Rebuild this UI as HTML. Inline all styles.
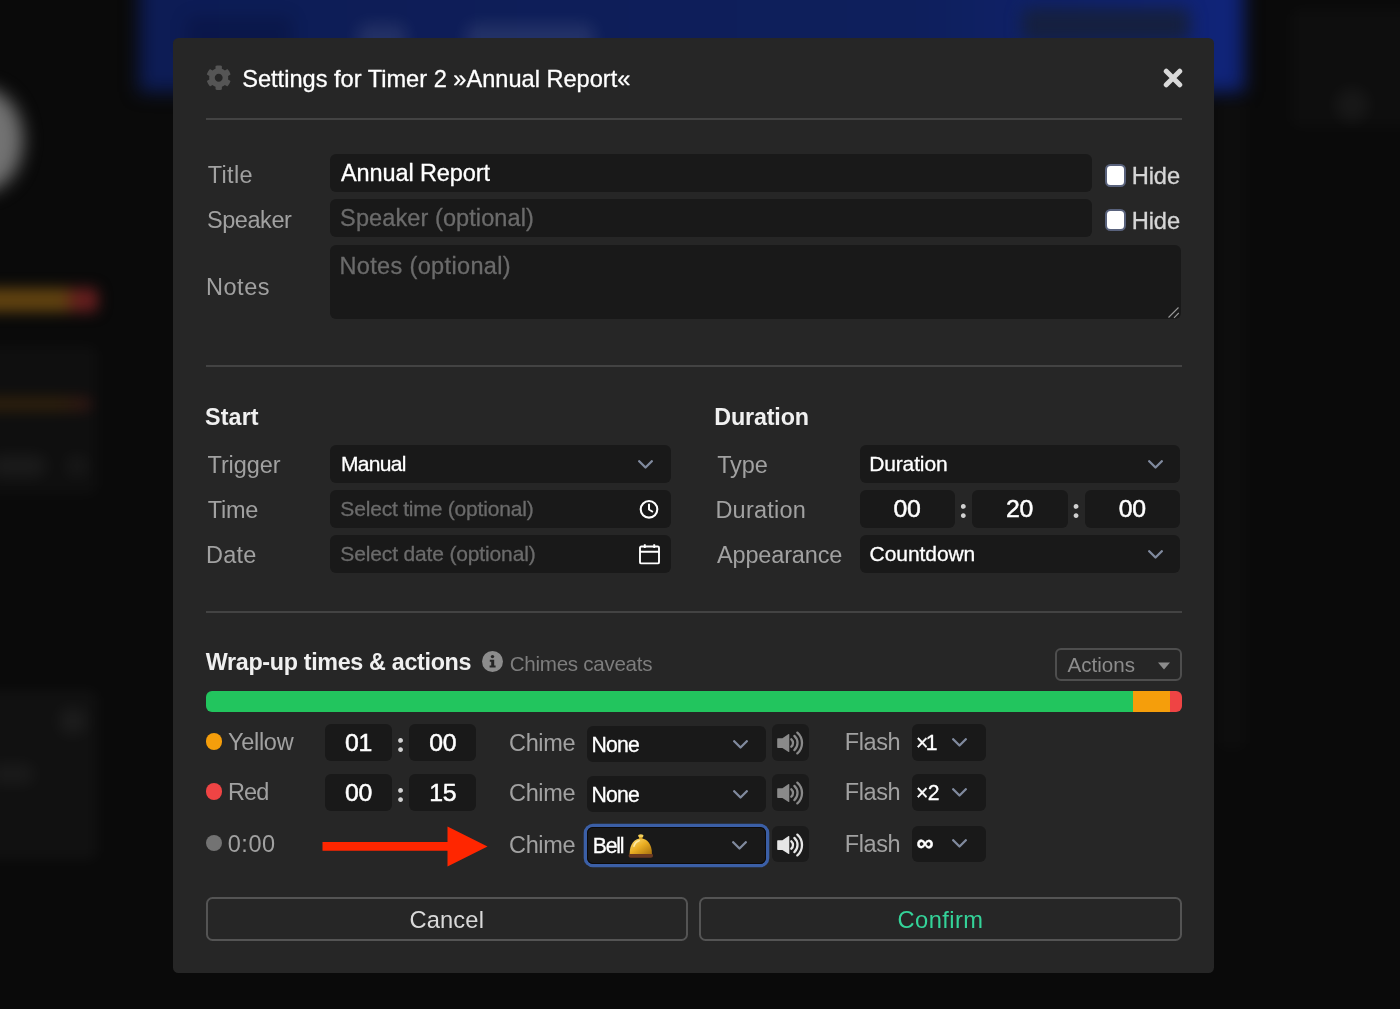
<!DOCTYPE html>
<html lang="en">
<head>
<meta charset="utf-8">
<title>Settings for Timer 2 »Annual Report«</title>
<style>
*{box-sizing:border-box;margin:0;padding:0}
html,body{width:1400px;height:1009px;overflow:hidden;background:#0a0a0a}
body{font-family:"Liberation Sans",sans-serif;color:#fff;position:relative}
.bg{position:absolute;left:0;top:0;width:1400px;height:1009px;overflow:hidden}
.bg div{position:absolute}
.blue{left:139px;top:-24px;width:1105px;height:116px;background:linear-gradient(90deg,#0d1c55 0,#0e1f5c 70%,#10247a 100%);filter:blur(9px)}
.lb{background:rgba(255,255,255,.09);border-radius:8px;filter:blur(8px)}
.db{background:rgba(0,0,20,.18);border-radius:8px;filter:blur(8px)}
.blob{left:-60px;top:88px;width:83px;height:104px;border-radius:50%;background:#727272;filter:blur(9px)}
.bar1{left:-20px;top:288px;width:118px;height:24px;border-radius:6px;background:linear-gradient(90deg,#604210 0,#604210 70%,#641e1e 82%,#641e1e 100%);filter:blur(7px)}
.bar2{left:-20px;top:397px;width:112px;height:14px;border-radius:6px;background:linear-gradient(90deg,#2b1c08 0,#2b1c08 70%,#2b1010 100%);filter:blur(7px)}
.dk1{left:1022px;top:8px;width:168px;height:34px;border-radius:8px;background:#15203f;filter:blur(8px)}
.modal{position:absolute;left:173px;top:37.5px;width:1041px;height:935.500px;background:#262626;border-radius:5.500px}
.abs{position:absolute}
.row{position:absolute;display:flex;align-items:center;white-space:nowrap}
.lbl{color:#a1a1a1;font-size:23.500px;height:38px;padding-top:3.500px}
.inp{-webkit-text-stroke:.3px currentColor;background:#191919;border-radius:6px;height:37.600px;font-size:21px;color:#fff;padding-left:11px}
.ph{color:#6b6b6b}
.hr{position:absolute;left:206px;width:976px;height:2px;background:#434343}
.h2{font-weight:700;font-size:23.300px;color:#f0f0f0;height:26px}
.num{justify-content:center;padding-left:0;font-size:24.800px;-webkit-text-stroke:.500px currentColor;text-indent:.6px}
.colon{color:#d2d2d2;font-family:"Liberation Serif",serif;font-size:29.500px;font-weight:700;justify-content:center;padding-top:.600px}
.btn{border:2px solid #545454;border-radius:6.500px;justify-content:center;font-size:23.700px;color:#d9d9d9;height:44px;padding-top:2px}
.cb{width:21px;height:22.300px;background:#fff;border:2px solid #59627c;border-radius:5.500px}
.hide{font-size:23.700px;-webkit-text-stroke:.300px currentColor;padding-top:1.200px;color:#d6d6d6;height:26px}
.sel{position:absolute}
.chev{position:absolute;right:17.500px;top:15px}
.ico{position:absolute;top:50%;transform:translateY(-50%)}
.dot{width:16.500px;height:16.500px;border-radius:50%}
.sm{height:36.500px}
.num.sm{padding-top:1.400px}
.chm{padding-top:2px;font-size:21.200px}
.fl{padding-top:1px;font-size:21.200px}
.c2{right:18.200px;top:14px}
.c3{right:18.500px;top:13.500px}
.spk{width:37px;height:36.500px;background:#1b1b1b;border-radius:6px;justify-content:center;padding-top:1px}
.focus{box-shadow:inset 0 0 0 1px #0c0a0a,0 0 0 3.300px #3b5fa6;width:178.500px !important}
.bell{margin-left:4.300px;margin-top:-1.200px}
button{font-family:inherit;background:transparent;cursor:pointer}
</style>
<style id="fit">
#ttl{letter-spacing:0.00px;margin-left:-0.80px}
#l_title{letter-spacing:0.35px;margin-left:0.67px}
#i_title{letter-spacing:-0.11px;text-indent:0.00px}
#i_speaker{letter-spacing:0.10px;text-indent:-0.90px}
#i_notes{letter-spacing:0.36px;text-indent:-1.60px}
.hide{letter-spacing:-0.08px;margin-left:-0.38px}
#l_speaker{letter-spacing:-0.44px;margin-left:0.00px}
#l_notes{letter-spacing:0.56px;margin-left:-1.12px}
#h_start{letter-spacing:0.12px;margin-left:-0.48px}
#l_trigger{letter-spacing:-0.10px;margin-left:0.50px}
#t_manual{letter-spacing:-0.69px;margin-left:0.00px}
#l_time{letter-spacing:-0.22px;margin-left:0.67px}
#t_seltime{letter-spacing:-0.19px;margin-left:-0.65px}
#l_date{letter-spacing:0.29px;margin-left:-1.12px}
#t_seldate{letter-spacing:-0.15px;margin-left:-0.65px}
#h_dur{letter-spacing:-0.15px;margin-left:-1.25px}
#l_type{letter-spacing:-0.12px;margin-left:0.18px}
#t_duration{letter-spacing:-0.13px;margin-left:-1.35px}
#l_dur{letter-spacing:0.23px;margin-left:-1.60px}
#l_app{letter-spacing:-0.16px;margin-left:0.00px}
#t_countdown{letter-spacing:-0.06px;margin-left:-0.97px}
#h_wrap{letter-spacing:-0.32px;margin-left:0.26px}
#t_caveats{letter-spacing:-0.29px;margin-left:-0.75px}
#t_actions{letter-spacing:-0.01px;margin-left:-0.14px}
#l_yellow{letter-spacing:-0.27px;margin-left:-0.60px}
#l_red{letter-spacing:-0.97px;margin-left:-0.40px}
#l_zero{letter-spacing:0.58px;margin-left:-0.82px}
.l_chime{letter-spacing:-0.39px;margin-left:-0.90px}
.t_none{letter-spacing:-0.83px;margin-left:-0.96px}
#t_bell{letter-spacing:-1.23px;margin-left:0.28px}
.l_flash{letter-spacing:-0.36px;margin-left:-1.36px}
#t_cancel{letter-spacing:0.15px}
#t_confirm{letter-spacing:0.43px}
.num{letter-spacing:-0.30px;text-indent:-0.30px}
</style>
</head>
<body>
<div id="app" style="position:absolute;left:0;top:0;width:1400px;height:1009px;will-change:transform">
<div class="bg">
  <div class="blue"></div>
  <div class="dk1"></div>
  <div class="db" style="left:186px;top:16px;width:106px;height:40px"></div>
  <div class="lb" style="left:358px;top:24px;width:48px;height:30px"></div>
  <div class="lb" style="left:466px;top:24px;width:128px;height:30px"></div>
  <div class="lb" style="left:1335px;top:88px;width:34px;height:34px;border-radius:50%;opacity:.5"></div>
  <div class="blob"></div>
  <div class="bar1"></div>
  <div class="bar2"></div>
  <div class="lb" style="left:-20px;top:345px;width:118px;height:150px;background:rgba(255,255,255,.022);filter:blur(7px)"></div>
  <div class="lb" style="left:-20px;top:690px;width:118px;height:170px;background:rgba(255,255,255,.03);filter:blur(7px)"></div>
  <div class="lb" style="left:-10px;top:455px;width:56px;height:22px;background:rgba(255,255,255,.05)"></div>
  <div class="lb" style="left:66px;top:455px;width:22px;height:22px;background:rgba(255,255,255,.04)"></div>
  <div class="lb" style="left:60px;top:708px;width:26px;height:26px;background:rgba(255,255,255,.05)"></div>
  <div class="lb" style="left:-10px;top:764px;width:44px;height:20px;background:rgba(255,255,255,.045)"></div>
  <div class="lb" style="left:1290px;top:8px;width:130px;height:120px;background:rgba(255,255,255,.02);filter:blur(7px)"></div>
  <div class="lb" style="left:1216px;top:100px;width:32px;height:650px;background:rgba(255,255,255,.015);filter:blur(7px)"></div>
</div>
<div class="modal"></div>

<!-- header -->
<svg class="abs" style="left:205.700px;top:65.400px" width="25.400" height="25.400" viewBox="0 0 512 512"><path fill="#555" d="M487.4 315.700l-42.600-24.600c4.300-23.200 4.300-47 0-70.200l42.600-24.600c4.900-2.800 7.100-8.600 5.500-14-11.100-35.600-30-67.800-54.700-94.600-3.800-4.100-10-5.100-14.800-2.300L380.800 110c-17.900-15.400-38.500-27.300-60.800-35.100V25.800c0-5.600-3.900-10.500-9.400-11.700-36.700-8.200-74.300-7.800-109.200 0-5.500 1.200-9.400 6.100-9.400 11.700V75c-22.200 7.900-42.800 19.800-60.800 35.100L88.700 85.500c-4.900-2.800-11-1.900-14.800 2.300-24.700 26.700-43.600 58.900-54.700 94.600-1.700 5.400.6 11.200 5.500 14L67.300 221c-4.300 23.200-4.300 47 0 70.200l-42.600 24.600c-4.900 2.800-7.100 8.600-5.500 14 11.100 35.600 30 67.800 54.700 94.600 3.800 4.100 10 5.100 14.800 2.300l42.600-24.600c17.900 15.400 38.500 27.300 60.800 35.100v49.200c0 5.600 3.900 10.500 9.400 11.700 36.700 8.200 74.300 7.800 109.200 0 5.500-1.200 9.400-6.100 9.400-11.700v-49.200c22.200-7.900 42.800-19.800 60.800-35.100l42.600 24.600c4.900 2.800 11 1.900 14.800-2.300 24.700-26.700 43.600-58.900 54.700-94.600 1.500-5.500-.7-11.300-5.600-14.100zM256 336c-44.100 0-80-35.900-80-80s35.900-80 80-80 80 35.900 80 80-35.900 80-80 80z"/></svg>
<h1 class="row" id="ttl" style="left:243px;top:64px;height:30px;font-weight:400;font-size:23.600px;-webkit-text-stroke:.300px #fff">Settings for Timer 2 »Annual Report«</h1>
<svg class="abs" style="left:1163.100px;top:67.850px" width="20" height="20" viewBox="0 0 20 20"><path d="M3.250 3.250L16.750 16.750M16.750 3.250L3.250 16.750" stroke="#d9d9d9" stroke-width="5" stroke-linecap="round"/></svg>
<div class="hr" style="top:118px"></div>

<!-- section 1 -->
<label class="row lbl" id="l_title" style="left:207px;top:155px">Title</label>
<div class="row inp" id="i_title" style="font-size:23.500px;left:330px;top:154px;width:762px;height:38px">Annual Report</div>
<span class="abs cb" style="left:1104.500px;top:164.300px"></span>
<label class="row hide" style="left:1132px;top:163px">Hide</label>

<label class="row lbl" id="l_speaker" style="left:207px;top:200px">Speaker</label>
<div class="row inp ph" id="i_speaker" style="font-size:23.500px;left:330px;top:199.400px;width:762px;height:38px">Speaker (optional)</div>
<span class="abs cb" style="left:1104.500px;top:209.200px"></span>
<label class="row hide" style="left:1132px;top:208px">Hide</label>

<label class="row lbl" id="l_notes" style="left:207px;top:267px">Notes</label>
<div class="row inp ph" id="i_notes" style="font-size:23.500px;left:330px;top:244.500px;width:850.500px;height:74.500px;align-items:flex-start;padding-top:8px">Notes (optional)</div>
<svg class="abs" style="left:1167px;top:306px" width="13" height="13" viewBox="0 0 13 13"><path d="M1.500 11.500L11.500 1.500M7 11.800L11.800 7" stroke="#9a9a9a" stroke-width="1.100" fill="none"/></svg>
<div class="hr" style="top:365px"></div>

<!-- section 2 -->
<h2 class="row h2" id="h_start" style="left:205.500px;top:404px">Start</h2>
<label class="row lbl" id="l_trigger" style="left:207px;top:445px">Trigger</label>
<div class="row inp sel" style="left:330px;top:445px;width:340.500px"><span id="t_manual">Manual</span><svg class="chev" width="15" height="9" viewBox="0 0 15 9"><path d="M1.200 1.200L7.500 7.500L13.800 1.200" stroke="#808a9e" stroke-width="2.300" fill="none" stroke-linecap="round" stroke-linejoin="round"/></svg></div>
<label class="row lbl" id="l_time" style="left:207px;top:490px">Time</label>
<div class="row inp ph sel" style="left:330px;top:490px;width:340.500px"><span id="t_seltime">Select time (optional)</span>
<svg class="ico" style="right:12px" width="20" height="20" viewBox="0 0 20 20"><circle cx="10" cy="10.300" r="8.300" stroke="#fff" stroke-width="2.100" fill="none"/><path d="M10 5.600V10.500L13.200 12.500" stroke="#fff" stroke-width="2" fill="none" stroke-linecap="round" stroke-linejoin="round"/></svg></div>
<label class="row lbl" id="l_date" style="left:207px;top:535px">Date</label>
<div class="row inp ph sel" style="left:330px;top:535px;width:340.500px"><span id="t_seldate">Select date (optional)</span>
<svg class="ico" style="right:11px" width="21" height="21" viewBox="0 0 21 21"><rect x="1" y="3" width="19" height="17" rx="1.300" stroke="#fff" stroke-width="1.900" fill="none"/><path d="M1 8.300H20M5.800 0.800V4.500M15.200 0.800V4.500" stroke="#fff" stroke-width="1.900" fill="none"/></svg></div>

<h2 class="row h2" id="h_dur" style="left:715.500px;top:404px">Duration</h2>
<label class="row lbl" id="l_type" style="left:717px;top:445px">Type</label>
<div class="row inp sel" style="left:859.500px;top:445px;width:320.500px"><span id="t_duration">Duration</span><svg class="chev" width="15" height="9" viewBox="0 0 15 9"><path d="M1.200 1.200L7.500 7.500L13.800 1.200" stroke="#808a9e" stroke-width="2.300" fill="none" stroke-linecap="round" stroke-linejoin="round"/></svg></div>
<label class="row lbl" id="l_dur" style="left:717px;top:490px">Duration</label>
<div class="row inp num" style="left:859.500px;top:490px;width:95.500px">00</div>
<span class="row colon" style="left:955px;top:489px;width:17px;height:38px">:</span>
<div class="row inp num" style="left:972px;top:490px;width:95.500px">20</div>
<span class="row colon" style="left:1067.500px;top:489px;width:17.500px;height:38px">:</span>
<div class="row inp num" style="left:1085px;top:490px;width:95px">00</div>
<label class="row lbl" id="l_app" style="left:717px;top:535px">Appearance</label>
<div class="row inp sel" style="left:859.500px;top:535px;width:320.500px"><span id="t_countdown">Countdown</span><svg class="chev" width="15" height="9" viewBox="0 0 15 9"><path d="M1.200 1.200L7.500 7.500L13.800 1.200" stroke="#808a9e" stroke-width="2.300" fill="none" stroke-linecap="round" stroke-linejoin="round"/></svg></div>
<div class="hr" style="top:611px"></div>

<!-- section 3 -->
<h2 class="row h2" id="h_wrap" style="left:205.500px;top:649.750px">Wrap-up times &amp; actions</h2>
<svg class="abs" style="left:482px;top:651px" width="21" height="21" viewBox="0 0 21 21"><circle cx="10.500" cy="10.500" r="10.500" fill="#8c8c8c"/><circle cx="10.500" cy="5.600" r="1.700" fill="#262626"/><path d="M7.800 8.800H12.200V14.600H13.600V16.600H7.600V14.600H9.200V10.800H7.800Z" fill="#262626"/></svg>
<span class="row" id="t_caveats" style="left:510.500px;top:651.600px;height:24px;font-size:20.600px;color:#7d7d7d">Chimes caveats</span>
<div class="row" style="left:1055px;top:648px;width:127px;height:33px;border:2px solid #4e4e4e;border-radius:6px;font-size:20.600px;color:#8c8c8c;padding-left:10.700px;padding-top:.300px"><span id="t_actions">Actions</span><svg class="abs" style="right:10.500px;top:11.800px" width="12" height="8" viewBox="0 0 12 8"><path d="M0 0.500H12L6 7.500Z" fill="#8c8c8c"/></svg></div>
<div class="abs" style="left:205.500px;top:691px;width:976.500px;height:21px;border-radius:6px;overflow:hidden;background:linear-gradient(90deg,#22c55e 0,#22c55e 927px,#f59e0b 927px,#f59e0b 964px,#ef4444 964px)"></div>
<span class="abs dot" style="left:205.500px;top:733.00px;background:#f59e0b"></span>
<label class="row lbl" id="l_yellow" style="left:228.500px;top:722.75px;height:36.500px">Yellow</label>
<div class="row inp num sm" style="left:325.200px;top:724.25px;width:66.700px">01</div>
<span class="row colon" style="left:392px;top:724.25px;width:17.500px;height:36.500px">:</span>
<div class="row inp num sm" style="left:409.200px;top:724.25px;width:67.200px">00</div>
<label class="row lbl l_chime" style="left:510px;top:723.50px;height:36.500px">Chime</label>
<div class="row inp sel sm chm" style="left:587px;top:725.65px;width:179px;padding-left:5.500px"><span class="t_none">None</span><svg class="chev c2" width="15" height="9" viewBox="0 0 15 9"><path d="M1.200 1.200L7.500 7.500L13.800 1.200" stroke="#808a9e" stroke-width="2.300" fill="none" stroke-linecap="round" stroke-linejoin="round"/></svg></div>
<span class="row spk" style="left:772px;top:724.25px"><svg width="27" height="24" viewBox="0 0 27 24"><path d="M0.800 7.300H5.400L11.600 3.100Q12.300 2.700 12.300 3.600V20.400Q12.300 21.300 11.600 20.900L5.400 16.900H0.800Q0.200 16.900 0.200 16.300V7.900Q0.200 7.300 0.800 7.300Z" fill="#8a8a8a"/><path d="M14.350 8.280A5 5 0 0 1 14.350 15.720M17.360 4.940A9.500 9.500 0 0 1 17.360 19.060M20.370 1.600A14 14 0 0 1 20.370 22.400" stroke="#8a8a8a" stroke-width="2.300" fill="none" stroke-linecap="round"/></svg></span>
<label class="row lbl l_flash" style="left:846px;top:722.50px;height:36.500px">Flash</label>
<div class="row inp sel sm fl" style="left:911.500px;top:724.25px;width:74px;padding-left:6px"><span style="letter-spacing:-2.700px;margin-left:-1.500px">×1</span><svg class="chev c3" width="15" height="9" viewBox="0 0 15 9"><path d="M1.200 1.200L7.500 7.500L13.800 1.200" stroke="#808a9e" stroke-width="2.300" fill="none" stroke-linecap="round" stroke-linejoin="round"/></svg></div>

<span class="abs dot" style="left:205.500px;top:783.00px;background:#ef4444"></span>
<label class="row lbl" id="l_red" style="left:228.500px;top:772.75px;height:36.500px">Red</label>
<div class="row inp num sm" style="left:325.200px;top:774.25px;width:66.700px">00</div>
<span class="row colon" style="left:392px;top:774.25px;width:17.500px;height:36.500px">:</span>
<div class="row inp num sm" style="left:409.200px;top:774.25px;width:67.200px">15</div>
<label class="row lbl l_chime" style="left:510px;top:773.50px;height:36.500px">Chime</label>
<div class="row inp sel sm chm" style="left:587px;top:775.65px;width:179px;padding-left:5.500px"><span class="t_none">None</span><svg class="chev c2" width="15" height="9" viewBox="0 0 15 9"><path d="M1.200 1.200L7.500 7.500L13.800 1.200" stroke="#808a9e" stroke-width="2.300" fill="none" stroke-linecap="round" stroke-linejoin="round"/></svg></div>
<span class="row spk" style="left:772px;top:774.25px"><svg width="27" height="24" viewBox="0 0 27 24"><path d="M0.800 7.300H5.400L11.600 3.100Q12.300 2.700 12.300 3.600V20.400Q12.300 21.300 11.600 20.900L5.400 16.900H0.800Q0.200 16.900 0.200 16.300V7.900Q0.200 7.300 0.800 7.300Z" fill="#8a8a8a"/><path d="M14.350 8.280A5 5 0 0 1 14.350 15.720M17.360 4.940A9.500 9.500 0 0 1 17.360 19.060M20.370 1.600A14 14 0 0 1 20.370 22.400" stroke="#8a8a8a" stroke-width="2.300" fill="none" stroke-linecap="round"/></svg></span>
<label class="row lbl l_flash" style="left:846px;top:772.50px;height:36.500px">Flash</label>
<div class="row inp sel sm fl" style="left:911.500px;top:774.25px;width:74px;padding-left:6px"><span style="letter-spacing:-.700px;margin-left:-1.500px">×2</span><svg class="chev c3" width="15" height="9" viewBox="0 0 15 9"><path d="M1.200 1.200L7.500 7.500L13.800 1.200" stroke="#808a9e" stroke-width="2.300" fill="none" stroke-linecap="round" stroke-linejoin="round"/></svg></div>

<span class="abs dot" style="left:205.500px;top:834.50px;background:#737373"></span>
<label class="row lbl" id="l_zero" style="left:228.500px;top:824.25px;height:36.500px">0:00</label>
<svg class="abs" style="left:322px;top:826.200px" width="166" height="41" viewBox="0 0 166 41"><path d="M0.500 16H125.500V0.500L165.500 20.500L125.500 40.500V24.800H0.500Z" fill="#ff2600"/></svg>
<label class="row lbl l_chime" style="left:510px;top:825.00px;height:36.500px">Chime</label>
<div class="row inp sel sm chm focus" style="left:587px;top:827.15px;width:179px;padding-left:5.500px"><span id="t_bell">Bell</span><svg class="bell" role="img" aria-label="bell" width="27.600" height="24.500" viewBox="0 0 26 24" preserveAspectRatio="none"><defs><linearGradient id="bg1" x1="0" y1="0" x2="1" y2="1"><stop offset="0" stop-color="#ffe27a"/><stop offset=".5" stop-color="#e9ad22"/><stop offset="1" stop-color="#a8720f"/></linearGradient></defs><rect x="1.500" y="19" width="23" height="4.300" rx="2" fill="#6b3a22"/><path d="M2.500 19.500C2.500 10 7 4.500 13 4.500S23.500 10 23.500 19.500Z" fill="url(#bg1)"/><rect x="11.300" y="1.200" width="3.400" height="4" rx="1.200" fill="#d9a428"/><ellipse cx="13" cy="1.800" rx="2.600" ry="1.500" fill="#f3cf5a"/><path d="M6.500 12C7.500 8.500 9.500 7 11.500 6.500" stroke="#fff3b8" stroke-width="1.500" fill="none" stroke-linecap="round" opacity=".8"/></svg><svg class="chev c2" width="15" height="9" viewBox="0 0 15 9"><path d="M1.200 1.200L7.500 7.500L13.800 1.200" stroke="#808a9e" stroke-width="2.300" fill="none" stroke-linecap="round" stroke-linejoin="round"/></svg></div>
<span class="row spk" style="left:772px;top:825.75px"><svg width="27" height="24" viewBox="0 0 27 24"><path d="M0.800 7.300H5.400L11.600 3.100Q12.300 2.700 12.300 3.600V20.400Q12.300 21.300 11.600 20.900L5.400 16.900H0.800Q0.200 16.900 0.200 16.300V7.900Q0.200 7.300 0.800 7.300Z" fill="#e6e6e6"/><path d="M14.350 8.280A5 5 0 0 1 14.350 15.720M17.360 4.940A9.500 9.500 0 0 1 17.360 19.060M20.370 1.600A14 14 0 0 1 20.370 22.400" stroke="#e6e6e6" stroke-width="2.300" fill="none" stroke-linecap="round"/></svg></span>
<label class="row lbl l_flash" style="left:846px;top:824.00px;height:36.500px">Flash</label>
<div class="row inp sel sm fl" style="left:911.500px;top:825.75px;width:74px;padding-left:6px"><span style="font-size:24px;line-height:20px;font-weight:700;margin-left:-1px;margin-top:-3px">∞</span><svg class="chev c3" width="15" height="9" viewBox="0 0 15 9"><path d="M1.200 1.200L7.500 7.500L13.800 1.200" stroke="#808a9e" stroke-width="2.300" fill="none" stroke-linecap="round" stroke-linejoin="round"/></svg></div>
<!-- footer -->
<button class="row btn" style="left:205.500px;top:897px;width:482.500px"><span id="t_cancel">Cancel</span></button>
<button class="row btn" style="left:699px;top:897px;width:483px;color:#34d399"><span id="t_confirm">Confirm</span></button>

</div>
</body>
</html>
